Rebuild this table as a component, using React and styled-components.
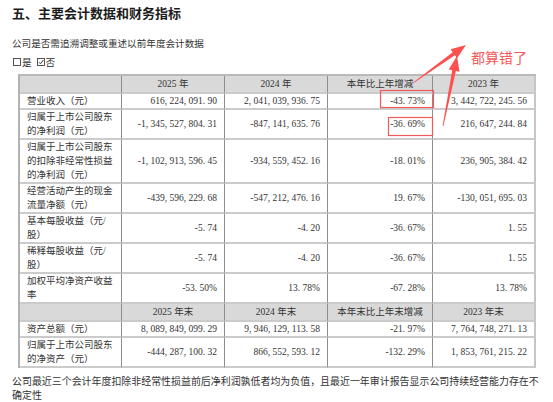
import React from 'react';
import styled, { createGlobalStyle } from 'styled-components';

const Global = createGlobalStyle`
  html, body { margin: 0; padding: 0; background: #fff; }
  body { font-family: "Noto Sans CJK SC", sans-serif; }
`;

const Page = styled.div`
  position: relative;
  width: 553px;
  height: 402px;
  overflow: hidden;
  box-sizing: border-box;
  padding: 3px 12px 0;
  color: #2e2e2e;
`;

const Title = styled.h1`
  margin: 0;
  font-family: "Noto Sans CJK SC", sans-serif;
  font-size: 13px;
  line-height: 20px;
  font-weight: 700;
  color: #1c1c1c;
`;

const Para = styled.p`
  margin: ${(p) => p.$mt}px 0 0;
  font-family: "Liberation Serif", "Noto Sans CJK SC", serif;
  font-size: ${(p) => p.$size || 9.6}px;
  line-height: 14px;
  color: #333;
  white-space: nowrap;
`;

const CheckRow = styled.div`
  margin-top: 4px;
  display: flex;
  align-items: center;
  font-size: 9.6px;
  line-height: 14px;
  color: #333;
`;

const CheckItem = styled.span`
  display: inline-flex;
  align-items: center;
  margin-right: ${(p) => p.$gap || 0}px;
`;

const Table = styled.table`
  margin: 5px 0 0 6px;
  width: 518px;
  table-layout: fixed;
  border-collapse: separate;
  border-spacing: 0;
  border-top: 2px solid #b9b9b9;
  border-left: 2px solid #b3b3b3;
  font-family: "Liberation Serif", "Noto Sans CJK SC", serif;
  font-size: 9.5px;
  color: #333;
`;

const Cell = styled.td`
  padding: ${(p) => (p.$head ? '1px 7px' : '0 7px')};
  line-height: 14px;
  background: ${(p) => (p.$head ? '#d9d9d9' : '#fff')};
  text-align: ${(p) => p.$align || 'left'};
  vertical-align: ${(p) => (p.$label ? 'top' : 'middle')};
  border-bottom: 2px solid #cbcbcb;
  border-right: ${(p) => (p.$last ? '2px solid #c6c6c6' : '1px solid #8d8d8d')};
  white-space: nowrap;
  overflow: hidden;
`;

const Footer = styled.p`
  margin: 6px 0 0;
  font-family: "Noto Sans CJK SC", sans-serif;
  font-size: 9.95px;
  line-height: 14px;
  color: #333;
  white-space: nowrap;
`;

const Overlay = styled.svg`
  position: absolute;
  left: 0;
  top: 0;
  pointer-events: none;
`;

const Note = styled.div`
  position: absolute;
  left: 471px;
  top: 48px;
  font-family: "Noto Sans CJK SC", sans-serif;
  font-size: 14px;
  line-height: 18px;
  color: #f4595a;
  white-space: nowrap;
`;

const Box = ({ checked }) => (
  <svg width="10" height="10" viewBox="0 0 10 10">
    <rect x="1.5" y="1.5" width="7" height="7" fill="none" stroke="#444" strokeWidth="0.9" />
    {checked && (
      <path d="M2.8 5.2 L4.4 6.8 L7.4 3" fill="none" stroke="#333" strokeWidth="1" />
    )}
  </svg>
);

function arrowPoints(x0, y0, x1, y1) {
  const dx = x1 - x0;
  const dy = y1 - y0;
  const len = Math.hypot(dx, dy);
  const ux = dx / len;
  const uy = dy / len;
  const nx = -uy;
  const ny = ux;
  const L = 15;
  const W = 5.5;
  const w = 1.9;
  const t = 0.4;
  const bx = x1 - ux * L;
  const by = y1 - uy * L;
  const pts = [
    [x0 + nx * t, y0 + ny * t],
    [bx + nx * w, by + ny * w],
    [bx + nx * W, by + ny * W],
    [x1, y1],
    [bx - nx * W, by - ny * W],
    [bx - nx * w, by - ny * w],
    [x0 - nx * t, y0 - ny * t],
  ];
  return pts.map((p) => p.map((v) => v.toFixed(1)).join(',')).join(' ');
}

const cols = [102, 103, 103, 105, 103];

const head1 = ['', '2025 年', '2024 年', '本年比上年增减', '2023 年'];
const head2 = ['', '2025 年末', '2024 年末', '本年末比上年末增减', '2023 年末'];

const rowsA = [
  { label: ['营业收入（元）'], v: ['616, 224, 091. 90', '2, 041, 039, 936. 75', '-43. 73%', '3, 442, 722, 245. 56'] },
  { label: ['归属于上市公司股东', '的净利润（元）'], v: ['-1, 345, 527, 804. 31', '-847, 141, 635. 76', '-36. 69%', '216, 647, 244. 84'] },
  { label: ['归属于上市公司股东', '的扣除非经常性损益', '的净利润（元）'], v: ['-1, 102, 913, 596. 45', '-934, 559, 452. 16', '-18. 01%', '236, 905, 384. 42'] },
  { label: ['经营活动产生的现金', '流量净额（元）'], v: ['-439, 596, 229. 68', '-547, 212, 476. 16', '19. 67%', '-130, 051, 695. 03'] },
  { label: ['基本每股收益（元/', '股）'], v: ['-5. 74', '-4. 20', '-36. 67%', '1. 55'] },
  { label: ['稀释每股收益（元/', '股）'], v: ['-5. 74', '-4. 20', '-36. 67%', '1. 55'] },
  { label: ['加权平均净资产收益', '率'], v: ['-53. 50%', '13. 78%', '-67. 28%', '13. 78%'] },
];

const rowsB = [
  { label: ['资产总额（元）'], v: ['8, 089, 849, 099. 29', '9, 946, 129, 113. 58', '-21. 97%', '7, 764, 748, 271. 13'] },
  { label: ['归属于上市公司股东', '的净资产（元）'], v: ['-444, 287, 100. 32', '866, 552, 593. 12', '-132. 29%', '1, 853, 761, 215. 22'] },
];

const HeadRow = ({ cells }) => (
  <tr>
    {cells.map((c, i) => (
      <Cell key={i} $head $align="center" $last={i === cells.length - 1}>
        {c}
      </Cell>
    ))}
  </tr>
);

const DataRow = ({ row }) => (
  <tr>
    <Cell $label>
      {row.label.map((l, i) => (
        <React.Fragment key={i}>
          {i > 0 && <br />}
          {l}
        </React.Fragment>
      ))}
    </Cell>
    {row.v.map((v, i) => (
      <Cell key={i} $align="right" $last={i === row.v.length - 1}>
        {v}
      </Cell>
    ))}
  </tr>
);

export default function App() {
  return (
    <>
      <Global />
      <Page>
        <Title>五、主要会计数据和财务指标</Title>
        <Para $mt={14}>公司是否需追溯调整或重述以前年度会计数据</Para>
        <CheckRow>
          <CheckItem $gap={4}>
            <Box />是
          </CheckItem>
          <CheckItem>
            <Box checked />否
          </CheckItem>
        </CheckRow>
        <Table>
          <colgroup>
            {cols.map((w, i) => (
              <col key={i} width={w} />
            ))}
          </colgroup>
          <tbody>
            <HeadRow cells={head1} />
            {rowsA.map((r, i) => (
              <DataRow key={i} row={r} />
            ))}
            <HeadRow cells={head2} />
            {rowsB.map((r, i) => (
              <DataRow key={i} row={r} />
            ))}
          </tbody>
        </Table>
        <Footer>
          公司最近三个会计年度扣除非经常性损益前后净利润孰低者均为负值，且最近一年审计报告显示公司持续经营能力存在不
          <br />
          确定性
        </Footer>
        <Overlay width="553" height="402" viewBox="0 0 553 402">
          <rect x="380.5" y="90.5" width="53" height="17" fill="none" stroke="#f05a5a" strokeWidth="1.2" />
          <rect x="388.5" y="117.5" width="44" height="18" fill="none" stroke="#f05a5a" strokeWidth="1.2" />
          <polygon points={arrowPoints(413, 83, 466, 45)} fill="#ff5050" />
          <polygon points={arrowPoints(443, 126, 457, 56)} fill="#ff5050" />
        </Overlay>
        <Note>都算错了</Note>
      </Page>
    </>
  );
}
